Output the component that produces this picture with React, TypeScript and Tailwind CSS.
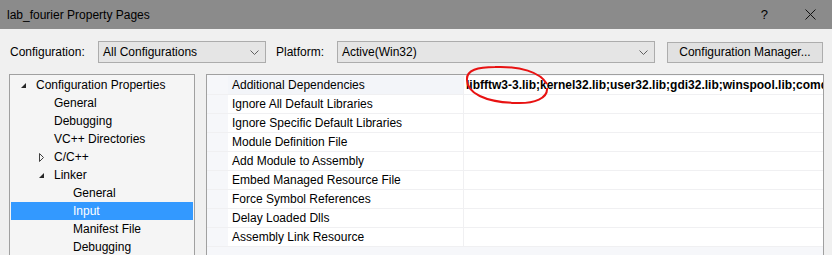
import React from 'react';

const treeRows: { label: string; indent: number; icon?: 'open' | 'closed'; selected?: boolean }[] = [
  { label: 'Configuration Properties', indent: 36, icon: 'open' },
  { label: 'General', indent: 54 },
  { label: 'Debugging', indent: 54 },
  { label: 'VC++ Directories', indent: 54 },
  { label: 'C/C++', indent: 54, icon: 'closed' },
  { label: 'Linker', indent: 54, icon: 'open' },
  { label: 'General', indent: 73 },
  { label: 'Input', indent: 73, selected: true },
  { label: 'Manifest File', indent: 73 },
  { label: 'Debugging', indent: 73 },
];

const props = [
  'Additional Dependencies',
  'Ignore All Default Libraries',
  'Ignore Specific Default Libraries',
  'Module Definition File',
  'Add Module to Assembly',
  'Embed Managed Resource File',
  'Force Symbol References',
  'Delay Loaded Dlls',
  'Assembly Link Resource',
];

function Chevron() {
  return (
    <svg width="9" height="5" viewBox="0 0 9 5" className="shrink-0">
      <path d="M0.5 0.5 L4.5 4.5 L8.5 0.5" fill="none" stroke="#606060" strokeWidth="1" />
    </svg>
  );
}

function TreeIcon({ kind }: { kind: 'open' | 'closed' }) {
  if (kind === 'open') {
    return (
      <svg width="7" height="7" viewBox="0 0 7 7">
        <path d="M6 1 L6 6 L1 6 Z" fill="#262626" />
      </svg>
    );
  }
  return (
    <svg width="7" height="9" viewBox="0 0 7 9">
      <path d="M1.5 0.5 L5.5 4.5 L1.5 8.5 Z" fill="none" stroke="#404040" strokeWidth="1" />
    </svg>
  );
}

export default function App() {
  return (
    <div className="w-[832px] h-[255px] overflow-hidden bg-[#f0f0f0] text-[12px] text-black font-['Liberation_Sans',Arial,sans-serif]">
      {/* title bar */}
      <div className="flex h-[29px] items-center bg-[#8b8b8b] pl-[7px]">
        <span>lab_fourier Property Pages</span>
        <span className="ml-auto mr-[37px] text-[13px]">?</span>
        <svg width="11" height="11" viewBox="0 0 11 11" className="mr-[16px]">
          <path d="M0.5 0.5 L10.5 10.5 M10.5 0.5 L0.5 10.5" stroke="#111" strokeWidth="1" />
        </svg>
      </div>

      {/* toolbar */}
      <div className="mt-[12px] flex h-[22px] items-center pl-[10px]">
        <span className="w-[88px]">Configuration:</span>
        <div className="flex h-[22px] w-[168px] items-center border border-[#acacac] bg-[#e5e5e5] pl-[4px] pr-[6px]">
          <span className="flex-1">All Configurations</span>
          <Chevron />
        </div>
        <span className="ml-[10px] w-[61px]">Platform:</span>
        <div className="flex h-[22px] w-[318px] items-center border border-[#acacac] bg-[#e5e5e5] pl-[4px] pr-[6px]">
          <span className="flex-1">Active(Win32)</span>
          <Chevron />
        </div>
        <div className="ml-[12px] flex h-[21px] w-[156px] items-center justify-center border border-[#adadad] bg-[#e1e1e1]">
          Configuration Manager...
        </div>
      </div>

      {/* panels */}
      <div className="mt-[11px] flex h-[200px] pl-[9px]">
        <div className="w-[186px] border border-[#a0a0a0] bg-[#f5f5f5] pt-[1px]">
          {treeRows.map((r, i) => (
            <div
              key={i}
              className={`relative flex h-[18px] items-center ${r.selected ? 'bg-[#3399ff] text-white mx-[1px]' : ''}`}
              style={{ paddingLeft: r.selected ? r.indent - 11 : r.indent - 10 }}
            >
              {r.icon && (
                <span className="absolute flex items-center" style={{ left: r.indent - 26 }}>
                  <TreeIcon kind={r.icon} />
                </span>
              )}
              {r.label}
            </div>
          ))}
        </div>

        <div className="relative ml-[11px] w-[618px] border border-[#a0a0a0] bg-[#f6f7fa] pt-[1px]">
          {props.map((p, i) => (
            <div key={p} className="flex h-[19px] border-b border-[#f0f0f2] pl-[21px]">
              <div
                className={`flex w-[236px] items-center border-r border-[#f0f0f2] pl-[4px] ${i === 0 ? 'bg-[#f3f5f9]' : 'bg-white'}`}
              >
                {p}
              </div>
              <div className="flex flex-1 items-center overflow-hidden whitespace-nowrap bg-white pl-[2px]">
                {i === 0 && <b>libfftw3-3.lib;kernel32.lib;user32.lib;gdi32.lib;winspool.lib;comdlg32.lib;advapi32.lib</b>}
              </div>
            </div>
          ))}
          <svg className="pointer-events-none absolute left-[-207px] top-[-75px]" width="832" height="255">
            <path
              d="M547 84 C540 72, 520 66, 495 67 C478 67, 466 70, 467 80 C467 93, 485 102, 515 103 C535 104, 548 98, 547 88"
              fill="none"
              stroke="#e81212"
              strokeWidth="2"
            />
          </svg>
        </div>
      </div>
    </div>
  );
}
